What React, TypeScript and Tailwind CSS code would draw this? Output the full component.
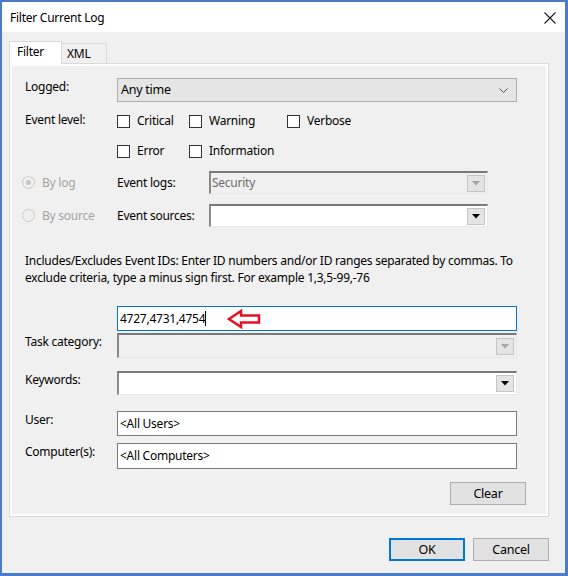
import React from 'react';

function Check({ label, w }: { label: string; w: string }) {
  return (
    <div className={`flex items-center ${w}`}>
      <span className="w-[13px] h-[13px] border border-[#333333] bg-white shrink-0" />
      <span className="ml-[7px]">{label}</span>
    </div>
  );
}

function Radio({ label, checked }: { label: string; checked?: boolean }) {
  return (
    <div className="flex items-center w-[95px]">
      <span className="w-[13px] h-[13px] rounded-full border border-[#c8c8c8] bg-[#f0f0f0] flex items-center justify-center shrink-0">
        {checked && <span className="w-[5px] h-[5px] rounded-full bg-[#c4c4c4]" />}
      </span>
      <span className="ml-[7px] text-[#a3a3a3]">{label}</span>
    </div>
  );
}

function DropBtn({ disabled }: { disabled?: boolean }) {
  return (
    <span className="w-[18px] h-[17px] mr-[2px] border border-[#c4c4c4] bg-[#e4e4e4] flex items-center justify-center shrink-0">
      <svg width="8" height="5" viewBox="0 0 8 5">
        <path d="M0 0 H8 L4 4.5 Z" fill={disabled ? '#a6a6a6' : '#000000'} />
      </svg>
    </span>
  );
}

function OldCombo({ w, h, disabled, value }: { w: string; h: string; disabled?: boolean; value?: string }) {
  return (
    <div
      className={`${w} ${h} flex items-center justify-between border-t-2 border-l-2 border-b border-r border-t-[#7a7a7a] border-l-[#8a8a8a] border-b-[#e8e8e8] border-r-[#e8e8e8] ${
        disabled ? 'bg-[#f0f0f0]' : 'bg-white'
      }`}
    >
      <span className="pl-[1px] text-[#6d6d6d]">{value}</span>
      <DropBtn disabled={disabled} />
    </div>
  );
}

function Row({ label, mt, children }: { label: string; mt: string; children: React.ReactNode }) {
  return (
    <div className={`flex items-start ${mt}`}>
      <span className="w-[92px] shrink-0 pt-[1px]">{label}</span>
      {children}
    </div>
  );
}

export default function App() {
  return (
    <div className="w-[568px] h-[576px] bg-[#4a7cc9] pt-[2px] pl-[2px] pr-[3px] pb-[3px] font-['Noto_Sans',sans-serif] text-[12px] leading-[16px] text-black tracking-[-0.25px]">
      <div className="h-full flex flex-col bg-[#f0f0f0]">
        <div className="h-[30px] bg-white flex items-center justify-between pl-[8px] pr-[9px] shrink-0">
          <span className="text-[12px] mt-[1px]">Filter Current Log</span>
          <svg width="12" height="12" viewBox="0 0 12 12" className="mt-[1px]">
            <path d="M0.5 0.5 L11.5 11.5 M11.5 0.5 L0.5 11.5" stroke="#1a1a1a" strokeWidth="1.1" />
          </svg>
        </div>

        <div className="flex-1 flex flex-col pl-[7px] pr-[16px] pt-[9px] pb-[12px]">
          <div className="flex items-end h-[23px]">
            <div className="relative z-10 w-[53px] h-[23px] border border-b-0 border-[#d9d9d9] bg-white pl-[7px] pt-[2px]">Filter</div>
            <div className="w-[45px] h-[21px] border border-l-0 border-[#d9d9d9] bg-[#f0f0f0] pl-[5px] pt-[2px]">XML</div>
          </div>

          <div className="-mt-px h-[454px] border border-[#d9d9d9] bg-white p-[2px]">
            <div className="h-full bg-[#f0f0f0] pl-[13px] pt-[12px] flex flex-col">
              <Row label="Logged:" mt="mt-0">
                <div className="w-[400px] h-[24px] border border-[#adadad] bg-[#e5e5e5] flex items-center justify-between pl-[3px] pr-[8px]">
                  <span className="text-[12.5px]">Any time</span>
                  <svg width="9" height="5" viewBox="0 0 9 5">
                    <path d="M0.5 0.5 L4.5 4.5 L8.5 0.5" fill="none" stroke="#555" strokeWidth="1" />
                  </svg>
                </div>
              </Row>

              <div className="flex items-start mt-[9px]">
                <span className="w-[92px] shrink-0 pt-[1px]">Event level:</span>
                <div className="flex flex-col">
                  <div className="flex h-[20px] items-center">
                    <Check label="Critical" w="w-[72px]" />
                    <Check label="Warning" w="w-[98px]" />
                    <Check label="Verbose" w="w-[80px]" />
                  </div>
                  <div className="flex h-[20px] items-center mt-[10px]">
                    <Check label="Error" w="w-[72px]" />
                    <Check label="Information" w="w-[98px]" />
                  </div>
                </div>
              </div>

              <div className="flex items-center mt-[10px] -ml-[3px]">
                <Radio label="By log" checked />
                <span className="w-[92px] shrink-0">Event logs:</span>
                <OldCombo w="w-[279px]" h="h-[23px]" disabled value="Security" />
              </div>
              <div className="flex items-center mt-[10px] -ml-[3px]">
                <Radio label="By source" />
                <span className="w-[92px] shrink-0">Event sources:</span>
                <OldCombo w="w-[279px]" h="h-[23px]" />
              </div>

              <p className="mt-[25px] leading-[17px] w-[510px]">
                Includes/Excludes Event IDs: Enter ID numbers and/or ID ranges separated by commas. To
                <br />
                exclude criteria, type a minus sign first. For example 1,3,5-99,-76
              </p>

              <div className="flex mt-[20px]">
                <span className="w-[92px] shrink-0" />
                <div className="w-[400px] h-[25px] border border-[#0078d7] bg-white flex items-center pl-[2px]">
                  <span>4727,4731,4754</span>
                  <span className="w-px h-[15px] bg-black" />
                  <svg width="35" height="20" viewBox="0 0 35 20" className="ml-[21px]">
                    <path d="M2 10 L14 2 L14 6.5 L32 6.5 L32 13.5 L14 13.5 L14 18 Z" fill="none" stroke="#e81123" strokeWidth="2.5" strokeLinejoin="miter" />
                  </svg>
                </div>
              </div>

              <Row label="Task category:" mt="mt-[2px]">
                <OldCombo w="w-[400px]" h="h-[25px]" disabled />
              </Row>
              <Row label="Keywords:" mt="mt-[13px]">
                <OldCombo w="w-[400px]" h="h-[24px]" />
              </Row>

              <Row label="User:" mt="mt-[16px]">
                <div className="w-[400px] h-[25px] border border-[#7a7a7a] bg-white flex items-center pl-[2px]">&lt;All Users&gt;</div>
              </Row>
              <Row label="Computer(s):" mt="mt-[7px]">
                <div className="w-[400px] h-[26px] border border-[#7a7a7a] bg-white flex items-center pl-[2px]">&lt;All Computers&gt;</div>
              </Row>

              <div className="flex mt-[13px] pl-[425px]">
                <button className="w-[76px] h-[23px] border border-[#adadad] bg-[#e1e1e1] text-[12.5px]">Clear</button>
              </div>
            </div>
          </div>

          <div className="flex justify-end gap-[8px] mt-[21px]">
            <button className="w-[76px] h-[23px] border-2 border-[#0078d7] bg-[#e1e1e1] text-[12.5px]">OK</button>
            <button className="w-[76px] h-[23px] border border-[#adadad] bg-[#e1e1e1] text-[12.5px]">Cancel</button>
          </div>
        </div>
      </div>
    </div>
  );
}
